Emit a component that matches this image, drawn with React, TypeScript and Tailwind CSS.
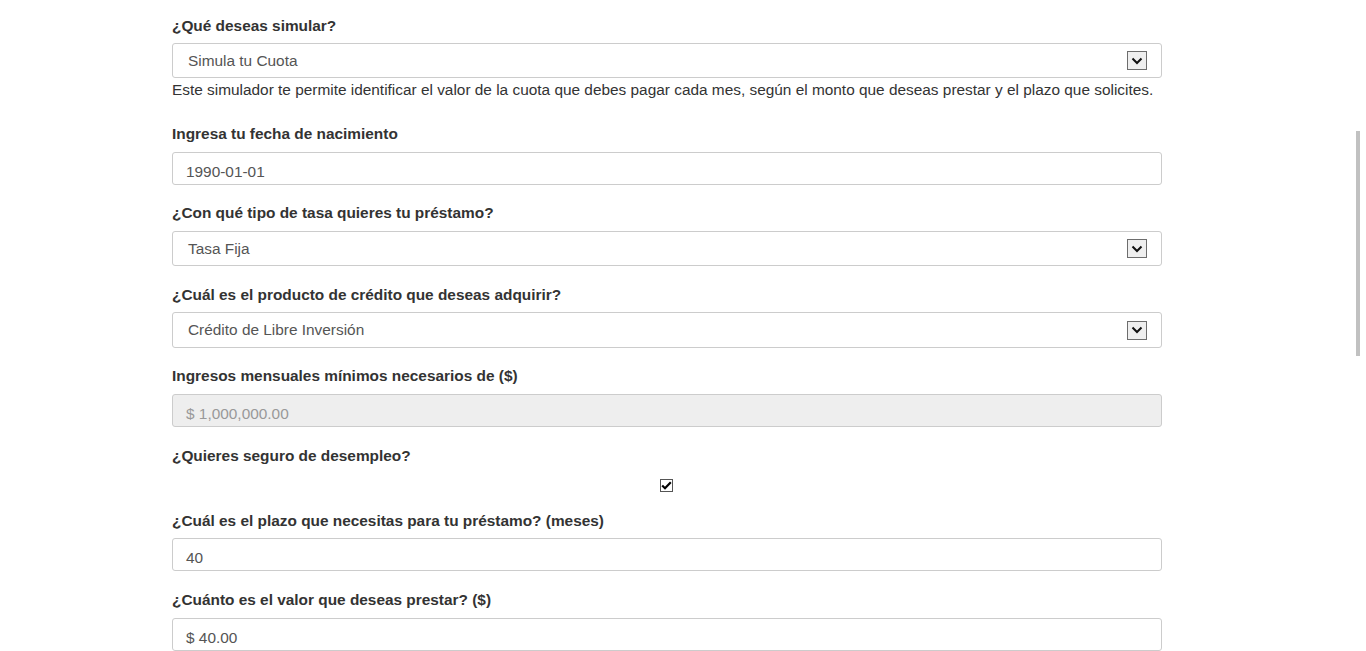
import React from "react";

const Arrow = () => (
  <div className="w-[20px] h-[19px] border border-[#6d6d6d] bg-[#efefef] flex items-center justify-center">
    <svg width="12" height="8" viewBox="0 0 12 8">
      <path d="M1.5 1.5 L6 6 L10.5 1.5" fill="none" stroke="#111" strokeWidth="2" />
    </svg>
  </div>
);

const Label = ({ children, cls }: { children: React.ReactNode; cls: string }) => (
  <div className={`h-[20px] pt-[2px] leading-[18px] text-[15.4px] font-bold text-[#333] ${cls}`}>{children}</div>
);

const Select = ({ value, h }: { value: string; h: string }) => (
  <div className={`${h} border border-[#cccccc] rounded-[3px] bg-white flex items-center justify-between pl-[15px] pr-[14px]`}>
    <span className="text-[15.4px] text-[#555]">{value}</span>
    <Arrow />
  </div>
);

const Input = ({ value, disabled }: { value: string; disabled?: boolean }) => (
  <div
    className={`h-[33px] border border-[#cccccc] rounded-[3px] flex items-center pl-[13px] pt-[6px] ${
      disabled ? "bg-[#eeeeee] text-[#999]" : "bg-white text-[#555]"
    } text-[15.4px]`}
  >
    {value}
  </div>
);

export default function App() {
  return (
    <div className="relative w-[1366px] h-[651px] overflow-hidden bg-white font-['Liberation_Sans',Arial,sans-serif]">
      <div className="ml-[172px] w-[990px] pt-[15px]">
        <Label cls="mb-[8px]">¿Qué deseas simular?</Label>
        <Select value="Simula tu Cuota" h="h-[35px]" />
        <p className="text-[15.4px] text-[#333] leading-[22px] mt-[1px] mb-[22px]">
          Este simulador te permite identificar el valor de la cuota que debes pagar cada mes, según el monto que deseas prestar y el plazo que solicites.
        </p>
        <Label cls="mb-[9px]">Ingresa tu fecha de nacimiento</Label>
        <Input value="1990-01-01" />
        <Label cls="mt-[17px] mb-[9px]">¿Con qué tipo de tasa quieres tu préstamo?</Label>
        <Select value="Tasa Fija" h="h-[35px]" />
        <Label cls="mt-[18px] mb-[8px]">¿Cuál es el producto de crédito que deseas adquirir?</Label>
        <Select value="Crédito de Libre Inversión" h="h-[36px]" />
        <Label cls="mt-[17px] mb-[9px]">Ingresos mensuales mínimos necesarios de ($)</Label>
        <Input value="$ 1,000,000.00" disabled />
        <Label cls="mt-[18px]">¿Quieres seguro de desempleo?</Label>
        <div className="flex justify-center mt-[14px] h-[13px]">
          <div className="w-[13px] h-[13px] border border-[#555] bg-white flex items-center justify-center ml-[-1px]">
            <svg width="11" height="9" viewBox="0 0 11 9">
              <path d="M1.2 4.5 L4 7.2 L9.8 1.2" fill="none" stroke="#000" strokeWidth="2.2" />
            </svg>
          </div>
        </div>
        <Label cls="mt-[18px] mb-[8px]">¿Cuál es el plazo que necesitas para tu préstamo? (meses)</Label>
        <Input value="40" />
        <Label cls="mt-[18px] mb-[9px]">¿Cuánto es el valor que deseas prestar? ($)</Label>
        <Input value="$ 40.00" />
      </div>
      <div className="absolute left-[1356px] top-[131px] w-[4px] h-[225px] bg-[#c1c1c1]" />
    </div>
  );
}
